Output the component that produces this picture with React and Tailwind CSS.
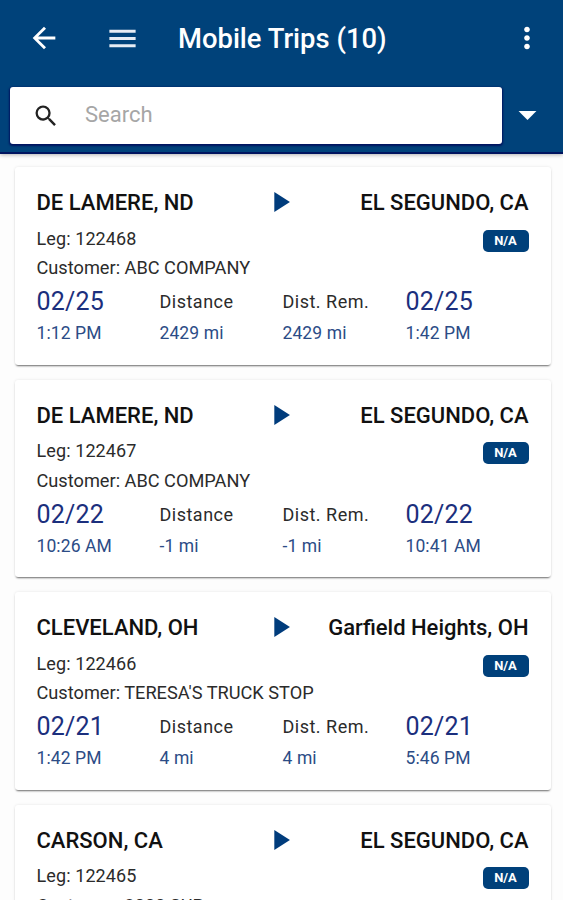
import { useState } from "react";
import {
  MdArrowBack,
  MdArrowDropDown,
  MdMenu,
  MdMoreVert,
  MdPlayArrow,
  MdSearch,
} from "react-icons/md";

const trips = [
  {
    leg: "122468",
    customer: "ABC COMPANY",
    from: "DE LAMERE, ND",
    to: "EL SEGUNDO, CA",
    startDate: "02/25",
    startTime: "1:12 PM",
    endDate: "02/25",
    endTime: "1:42 PM",
    distance: "2429 mi",
    remaining: "2429 mi",
  },
  {
    leg: "122467",
    customer: "ABC COMPANY",
    from: "DE LAMERE, ND",
    to: "EL SEGUNDO, CA",
    startDate: "02/22",
    startTime: "10:26 AM",
    endDate: "02/22",
    endTime: "10:41 AM",
    distance: "-1 mi",
    remaining: "-1 mi",
  },
  {
    leg: "122466",
    customer: "TERESA'S TRUCK STOP",
    from: "CLEVELAND, OH",
    to: "Garfield Heights, OH",
    startDate: "02/21",
    startTime: "1:42 PM",
    endDate: "02/21",
    endTime: "5:46 PM",
    distance: "4 mi",
    remaining: "4 mi",
  },
  {
    leg: "122465",
    customer: "3000 SUP",
    from: "CARSON, CA",
    to: "EL SEGUNDO, CA",
  },
];

function DateCell({ date, time }) {
  return (
    <div className="text-[#1b2f7d]">
      <p className="h-[33px] text-[25px] leading-[34px] tracking-[0.2px]">{date}</p>
      <p className="h-[30px] text-[17.5px] leading-[30px] tracking-[0.1px] text-[#2c4c86]">{time}</p>
    </div>
  );
}

function StatCell({ label, value }) {
  return (
    <div>
      <p className="h-[33px] text-[18px] leading-[33px] tracking-[0.5px]">{label}</p>
      <p className="h-[30px] text-[17.5px] leading-[30px] tracking-[0.1px] text-[#2c4c86]">{value}</p>
    </div>
  );
}

function TripCard({ trip }) {
  return (
    <div className="h-[197.5px] shrink-0 rounded-[3px] bg-white pt-[18px] pr-[22.5px] pl-[21.5px] text-[#2b2b2b] shadow-[0_2px_2px_-1px_rgba(0,0,0,0.55),0_0_3px_rgba(0,0,0,0.1)]">
      {/* origin -> destination */}
      <div className="grid h-[35px] grid-cols-[226px_34px_1fr] items-center text-[22px] font-medium text-[#111]">
        <span>{trip.from}</span>
        <MdPlayArrow size={34} className="-mt-[1px] text-[#003c7c]" />
        <span className="-ml-8 text-right whitespace-nowrap">{trip.to}</span>
      </div>

      <div className="flex h-[35px] items-center justify-between">
        <span className="pt-[1px] text-[18px] tracking-[0.1px]">Leg: {trip.leg}</span>
        <span className="mt-[6px] flex h-[22px] w-[46px] items-center justify-center rounded-[5px] bg-[#00407a] text-[13px] font-bold text-white">
          N/A
        </span>
      </div>
      <p className="h-[30px] pt-[1px] text-[18.2px] leading-[24px]">Customer: {trip.customer}</p>

      {trip.startDate && (
        <div className="grid grid-cols-4">
          <DateCell date={trip.startDate} time={trip.startTime} />
          <StatCell label="Distance" value={trip.distance} />
          <StatCell label="Dist. Rem." value={trip.remaining} />
          <DateCell date={trip.endDate} time={trip.endTime} />
        </div>
      )}
    </div>
  );
}

export default function App() {
  const [search, setSearch] = useState("");

  return (
    <div className="flex h-[900px] w-full flex-col overflow-hidden bg-[#fdfdfd] font-[Roboto,sans-serif]">
      <header className="z-10 h-[153.5px] shrink-0 border-b-2 border-[#00145f] bg-[#00427a] text-white shadow-[0_1px_4px_rgba(0,0,0,0.3)]">
        <div className="flex h-[76px] items-center pr-[19px] pl-[27px]">
          <MdArrowBack size={34} />
          <MdMenu size={35} className="ml-[44px] text-[#e6ecf4]" />
          <h1 className="ml-[38px] flex-1 pt-[4px] text-[27.4px] font-medium">Mobile Trips (10)</h1>
          <MdMoreVert size={34} />
        </div>

        <div className="flex items-center pt-[11px] pl-[9.5px]">
          <div className="flex h-[57px] w-[492px] items-center rounded-[3px] bg-white pl-[22px] shadow-[0_1px_2px_1px_#00145f]">
            <MdSearch size={28} className="text-[#222]" />
            <input
              type="text"
              placeholder="Search"
              value={search}
              onChange={(e) => setSearch(e.target.value)}
              className="mb-[2px] ml-[25.5px] w-[360px] text-[22px] text-gray-800 outline-none placeholder:text-[#a6a6a6]"
            />
          </div>
          <MdArrowDropDown size={43} className="-mt-[2px] ml-[4px]" />
        </div>
      </header>

      <main className="flex flex-col gap-[15px] pt-[13.5px] pr-[12px] pl-[15px]">
        {trips.map((trip) => (
          <TripCard key={trip.leg} trip={trip} />
        ))}
      </main>
    </div>
  );
}
